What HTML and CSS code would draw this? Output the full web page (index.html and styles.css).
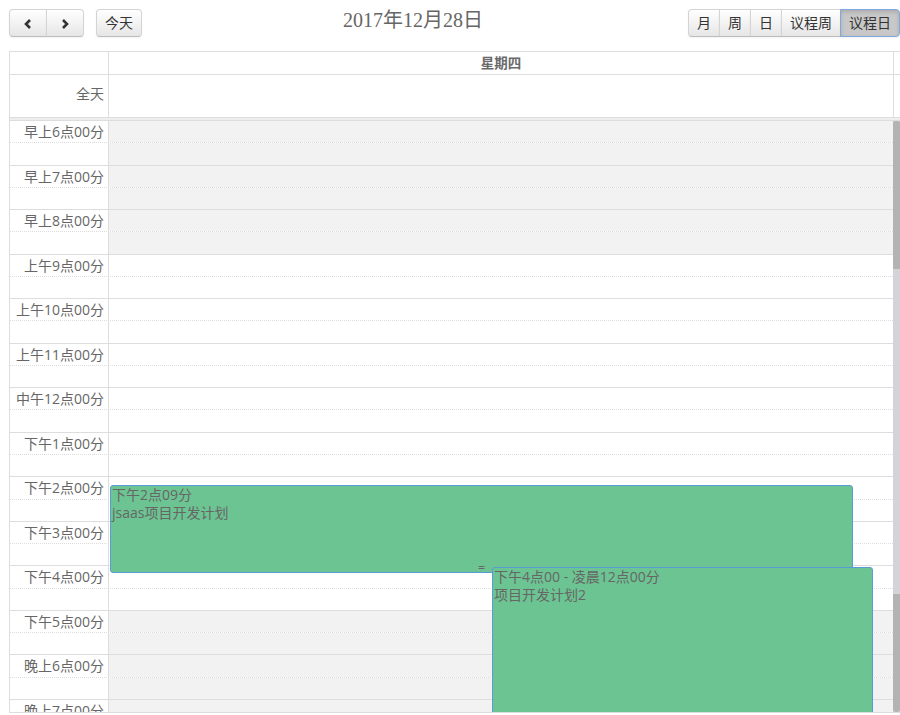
FILE: index.html
```html
<!DOCTYPE html>
<html lang="zh-CN">
<head>
<meta charset="utf-8">
<title>日程</title>
<link rel="stylesheet" href="styles.css">
</head>
<body>
<div class="fc">
  <div class="toolbar">
    <div class="tb-left">
      <div class="btn-group">
        <button class="btn btn-icon" aria-label="上一天"><svg width="8" height="10" viewBox="0 0 8 10"><path d="M6 1 L2 5 L6 9" fill="none" stroke="#333" stroke-width="2.6" stroke-linejoin="miter"/></svg></button>
        <button class="btn btn-icon" aria-label="下一天"><svg width="8" height="10" viewBox="0 0 8 10"><path d="M2 1 L6 5 L2 9" fill="none" stroke="#333" stroke-width="2.6" stroke-linejoin="miter"/></svg></button>
      </div>
      <button class="btn btn-single">今天</button>
    </div>
    <div class="tb-center"><h2 class="title">2017年12月28日</h2></div>
    <div class="tb-right btn-group">
      <button class="btn">月</button>
      <button class="btn">周</button>
      <button class="btn">日</button>
      <button class="btn">议程周</button>
      <button class="btn active">议程日</button>
    </div>
  </div>

  <div class="view">
    <div class="row head">
      <div class="axis"></div>
      <div class="day">星期四</div>
      <div class="gutter"></div>
    </div>
    <div class="row allday">
      <div class="axis">全天</div>
      <div class="day"></div>
      <div class="gutter"></div>
    </div>
    <div class="divider"></div>
    <div class="body">
      <div class="grid">
        <div class="slats">
          <div class="slat"><div class="axis">早上6点00分</div><div class="cell off"></div></div>
          <div class="slat minor"><div class="axis"></div><div class="cell off"></div></div>
          <div class="slat"><div class="axis">早上7点00分</div><div class="cell off"></div></div>
          <div class="slat minor"><div class="axis"></div><div class="cell off"></div></div>
          <div class="slat"><div class="axis">早上8点00分</div><div class="cell off"></div></div>
          <div class="slat minor"><div class="axis"></div><div class="cell off"></div></div>
          <div class="slat"><div class="axis">上午9点00分</div><div class="cell"></div></div>
          <div class="slat minor"><div class="axis"></div><div class="cell"></div></div>
          <div class="slat"><div class="axis">上午10点00分</div><div class="cell"></div></div>
          <div class="slat minor"><div class="axis"></div><div class="cell"></div></div>
          <div class="slat"><div class="axis">上午11点00分</div><div class="cell"></div></div>
          <div class="slat minor"><div class="axis"></div><div class="cell"></div></div>
          <div class="slat"><div class="axis">中午12点00分</div><div class="cell"></div></div>
          <div class="slat minor"><div class="axis"></div><div class="cell"></div></div>
          <div class="slat"><div class="axis">下午1点00分</div><div class="cell"></div></div>
          <div class="slat minor"><div class="axis"></div><div class="cell"></div></div>
          <div class="slat"><div class="axis">下午2点00分</div><div class="cell"></div></div>
          <div class="slat minor"><div class="axis"></div><div class="cell"></div></div>
          <div class="slat"><div class="axis">下午3点00分</div><div class="cell"></div></div>
          <div class="slat minor"><div class="axis"></div><div class="cell"></div></div>
          <div class="slat"><div class="axis">下午4点00分</div><div class="cell"></div></div>
          <div class="slat minor"><div class="axis"></div><div class="cell"></div></div>
          <div class="slat"><div class="axis">下午5点00分</div><div class="cell off"></div></div>
          <div class="slat minor"><div class="axis"></div><div class="cell off"></div></div>
          <div class="slat"><div class="axis">晚上6点00分</div><div class="cell off"></div></div>
          <div class="slat minor"><div class="axis"></div><div class="cell off"></div></div>
          <div class="slat"><div class="axis">晚上7点00分</div><div class="cell off"></div></div>
          <div class="slat minor"><div class="axis"></div><div class="cell off"></div></div>
          <div class="slat"><div class="axis">晚上8点00分</div><div class="cell off"></div></div>
          <div class="slat minor"><div class="axis"></div><div class="cell off"></div></div>
        </div>
        <div class="events">
          <div class="event" style="top:364px;height:88px;left:1px;width:743px;">
            <div class="ev-time">下午2点09分</div>
            <div class="ev-title">jsaas项目开发计划</div>
            <div class="resizer">=</div>
          </div>
          <div class="event ev-front" style="top:446px;height:220px;left:383px;width:381px;">
            <div class="ev-time">下午4点00 - 凌晨12点00分</div>
            <div class="ev-title">项目开发计划2</div>
          </div>
        </div>
      </div>
      <div class="scrollbar">
        <div class="thumb thumb-top"></div>
        <div class="track"></div>
        <div class="thumb thumb-bottom"></div>
      </div>
    </div>
  </div>
</div>
</body>
</html>
```

FILE: styles.css
```css
* { box-sizing: border-box; }

html, body {
  margin: 0;
  padding: 0;
  background: #fff;
}

body {
  font-family: "Open Sans", "Noto Sans CJK SC", sans-serif;
  font-size: 14px;
  color: #666;
  overflow: hidden;
  height: 715px;
}

.fc {
  margin-left: 9px;
  width: 891px;
}

/* toolbar */
.toolbar {
  display: flex;
  align-items: flex-start;
  padding-top: 9px;
  height: 51px;
}

.tb-left {
  display: flex;
  gap: 12px;
}

.tb-center {
  flex: 1;
  text-align: center;
}

.title {
  margin: 0;
  padding-top: 0;
  padding-right: 4px;
  font-family: "Liberation Serif", "Noto Sans CJK SC", serif;
  font-weight: normal;
  font-size: 20px;
  line-height: 22px;
  color: #666;
}

.btn-group {
  display: flex;
}

.btn {
  height: 28px;
  padding: 0 8px;
  margin: 0;
  font-family: "Open Sans", "Noto Sans CJK SC", sans-serif;
  font-size: 14px;
  line-height: 26px;
  color: #333;
  background: linear-gradient(#ffffff, #e6e6e6);
  border: 1px solid #d4d4d4;
  border-bottom-color: #bcbcbc;
  border-radius: 0;
  box-shadow: inset 0 1px 0 rgba(255,255,255,.2), 0 1px 2px rgba(0,0,0,.05);
  cursor: pointer;
  position: relative;
}

.btn-group .btn + .btn {
  margin-left: -1px;
}

.btn-group .btn:first-child {
  border-radius: 4px 0 0 4px;
}

.btn-group .btn:last-child {
  border-radius: 0 4px 4px 0;
}

.btn-single {
  border-radius: 4px;
  width: 46px;
  padding: 0;
}

.btn-icon {
  width: 38px;
  padding: 0;
  display: flex;
  align-items: center;
  justify-content: center;
}

.btn-icon svg {
  display: block;
  margin-top: 1px;
}

.btn.active {
  background: #c8c8c8;
  border-color: #7ea9e0;
  box-shadow: inset 0 2px 4px rgba(0,0,0,.15), 0 1px 2px rgba(0,0,0,.05);
  z-index: 1;
}

/* view */
.view {
  border-left: 1px solid #ddd;
  border-top: 1px solid #ddd;
}

.row {
  display: flex;
  border-bottom: 1px solid #ddd;
}

.row .axis {
  width: 99px;
  flex: none;
  border-right: 1px solid #ddd;
}

.row .day {
  width: 785px;
  flex: none;
  border-right: 1px solid #ddd;
}

.row .gutter {
  flex: 1;
}

.head {
  height: 23px;
}

.head .day {
  text-align: center;
  font-weight: bold;
  font-size: 13.5px;
  line-height: 22px;
  color: #6a6a6a;
}

.allday {
  height: 43px;
}

.allday .axis {
  text-align: right;
  padding-right: 4px;
  line-height: 38px;
  color: #666;
}

.divider {
  height: 3px;
  background: #eee;
  border-bottom: 1px solid #ddd;
}

.body {
  display: flex;
  height: 592px;
  border-bottom: 1px solid #ddd;
  overflow: hidden;
}

.grid {
  flex: 1;
  position: relative;
  overflow: hidden;
}

.slat {
  display: flex;
  height: 22.27px;
  border-bottom: 1px dotted #ddd;
}

.slat.minor {
  border-bottom: 1px solid #ddd;
}

.slat .axis {
  width: 99px;
  flex: none;
  border-right: 1px solid #ddd;
  text-align: right;
  padding-right: 4px;
  line-height: 22px;
  white-space: nowrap;
  color: #666;
}

.slat .cell {
  flex: 1;
}

.slat .cell.off {
  background: #f2f2f2;
}

/* events */
.events {
  position: absolute;
  top: 0;
  bottom: 0;
  left: 99px;
  right: 0;
}

.event {
  position: absolute;
  background: #6cc492;
  border: 1px solid #5b9bd5;
  border-radius: 3px;
  color: #666;
  font-size: 14px;
  line-height: 18px;
  padding: 0 1px;
  overflow: hidden;
}

.ev-front {
  z-index: 2;
}

.ev-time {
  white-space: nowrap;
}

.ev-title {
  white-space: nowrap;
}

.resizer {
  position: absolute;
  left: 0;
  right: 0;
  bottom: 0;
  height: 8px;
  line-height: 8px;
  font-size: 11px;
  font-family: "DejaVu Sans Mono", monospace;
  text-align: center;
  color: #666;
}

/* scrollbar */
.scrollbar {
  width: 7px;
  flex: none;
  display: flex;
  flex-direction: column;
  background: #d3d3d8;
}

.thumb {
  background: #b3b3b3;
}

.thumb-top {
  height: 148px;
  border-radius: 2px 2px 0 0;
}

.track {
  flex: 1;
}

.thumb-bottom {
  height: 118px;
  border-radius: 0 0 3px 3px;
}
```
